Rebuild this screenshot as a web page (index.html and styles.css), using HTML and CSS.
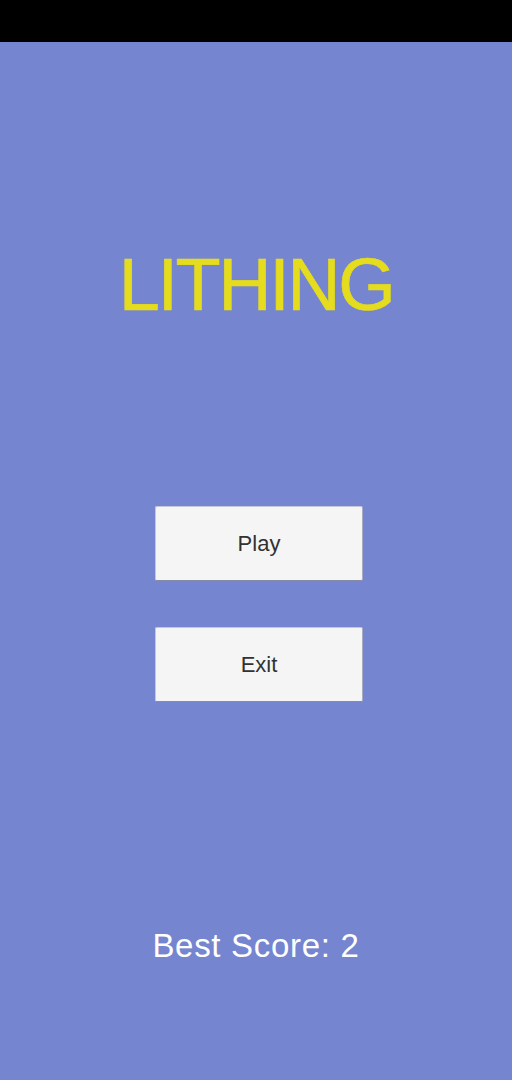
FILE: index.html
```html
<!DOCTYPE html>
<html>
<head>
<meta charset="utf-8">
<link rel="stylesheet" href="styles.css">
</head>
<body>
<div class="status-bar"></div>
<main class="screen">
  <h1 class="title">LITHING</h1>
  <div class="menu">
    <button class="btn">Play</button>
    <button class="btn">Exit</button>
  </div>
  <p class="best">Best Score: 2</p>
</main>
</body>
</html>
```
FILE: styles.css
```css
html, body {
  margin: 0;
  padding: 0;
  height: 100%;
}
body {
  background: #7585d0;
  font-family: "Liberation Sans", Arial, sans-serif;
}
.status-bar {
  height: 42px;
  background: #000;
}
.screen {
  display: flex;
  flex-direction: column;
  align-items: center;
}
.title {
  margin: 200px 0 0 0;
  font-size: 74px;
  line-height: 86px;
  font-weight: normal;
  letter-spacing: -2.5px;
  -webkit-text-stroke: 0.6px #e5dc1e;
  color: #e5dc1e;
}
.menu {
  margin-top: 178px;
  display: flex;
  flex-direction: column;
  gap: 46px;
  transform: translateX(3px);
}
.btn {
  width: 208px;
  height: 75px;
  box-sizing: border-box;
  background: #f5f5f5;
  border: 1px solid #c4c7da;
  border-bottom-color: #868aa6;
  border-right-color: #a9adc4;
  border-radius: 2px;
  font-family: "Liberation Sans", Arial, sans-serif;
  font-size: 22px;
  color: #323232;
  display: flex;
  align-items: center;
  justify-content: center;
  padding: 0;
}
.best {
  margin: 224px 0 0 0;
  font-size: 33px;
  line-height: 40px;
  letter-spacing: 0.7px;
  color: #ffffff;
}
```
